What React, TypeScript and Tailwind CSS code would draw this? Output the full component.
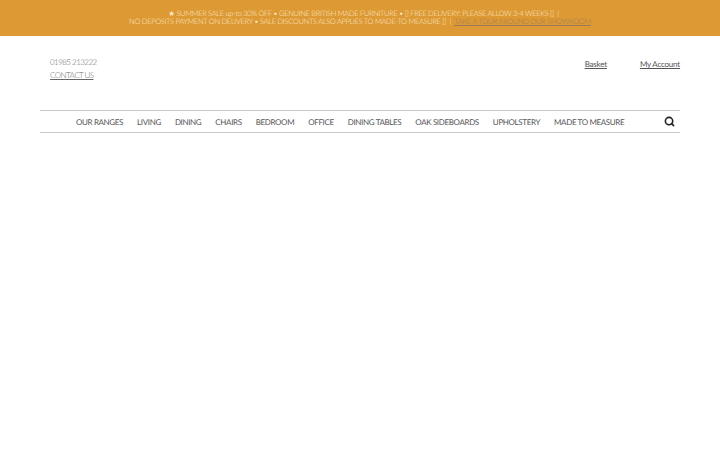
import { Search } from "lucide-react";

const navItems = [
	"OUR RANGES",
	"LIVING",
	"DINING",
	"CHAIRS",
	"BEDROOM",
	"OFFICE",
	"DINING TABLES",
	"OAK SIDEBOARDS",
	"UPHOLSTERY",
	"MADE TO MEASURE",
];

export default function App() {
	return (
		<div className="min-h-[450px] bg-white font-['Lato',sans-serif] antialiased [text-rendering:geometricPrecision]">
			<div className="h-9 bg-[#dd9933] pt-[10px] text-center text-[7.5px] font-light leading-[8px] tracking-[-0.32px] whitespace-nowrap text-[#fbeed6]">
				<p className="pl-[7px] tracking-[-0.34px]">★ SUMMER SALE up-to 30% OFF • GENUINE BRITISH MADE FURNITURE • [] FREE DELIVERY: PLEASE ALLOW 3-4 WEEKS [] &nbsp;|</p>
				<p>
					NO DEPOSITS PAYMENT ON DELIVERY • SALE DISCOUNTS ALSO APPLIES TO MADE-TO MEASURE [] &nbsp;|&nbsp;{" "}
					<a className="text-[#9a7a5c] underline">TAKE A TOUR AROUND OUR SHOWROOM</a>
				</p>
			</div>

			<header className="px-10">
				<div className="flex h-[74px] items-start justify-between pl-[10px] pt-5">
					<div className="text-[8px] font-light leading-[12.5px] tracking-[-0.55px] text-[#666666]">
						<p>01985 213222</p>
						<a className="underline">CONTACT US</a>
					</div>
					<div className="mt-[2px] flex gap-[33px] text-[8px] leading-3 tracking-[-0.2px] text-[#555555]">
						<a className="underline">Basket</a>
						<a className="underline">My Account</a>
					</div>
				</div>

				<nav className="flex h-[23px] items-center border-y border-[#c8c8c8] pl-9 pr-[5px]">
					<ul className="flex gap-[14px] whitespace-nowrap text-[8px] tracking-[-0.36px] text-[#555555]">
						{navItems.map((item) => (
							<li key={item}>{item}</li>
						))}
					</ul>
					<Search className="ml-auto h-[11px] w-[11px] text-[#222222]" strokeWidth={3.5} />
				</nav>
			</header>
		</div>
	);
}
